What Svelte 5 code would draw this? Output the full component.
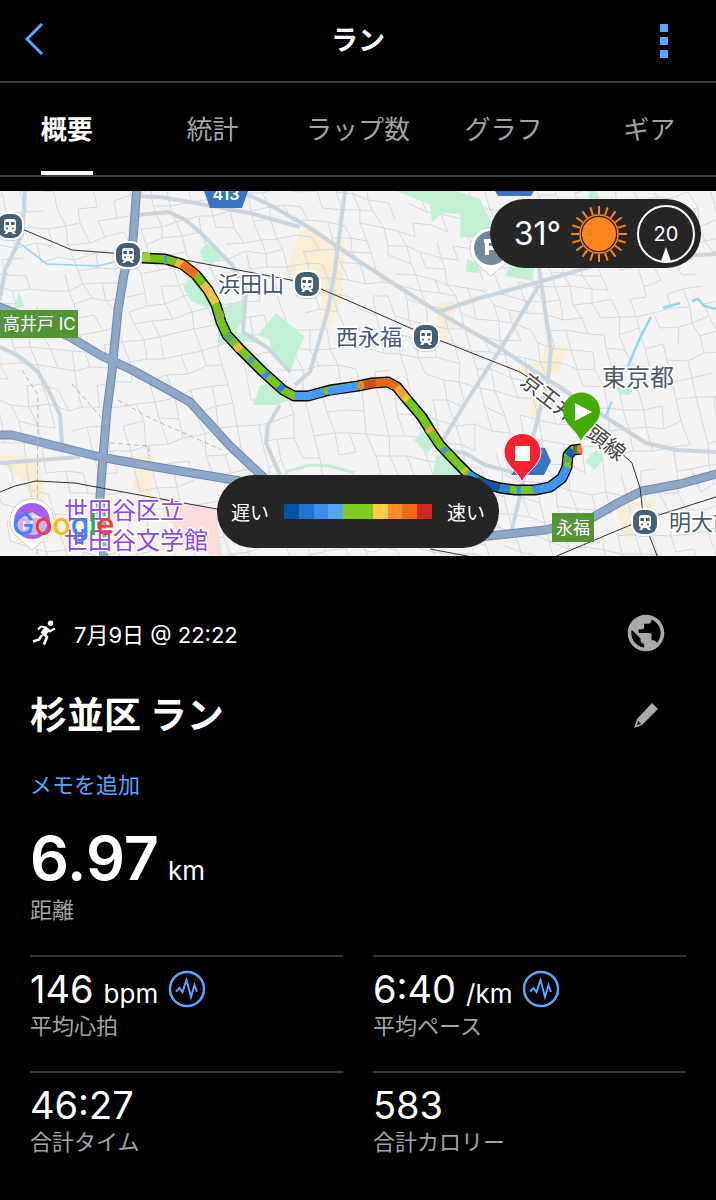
<script>
  const tabs = ['概要', '統計', 'ラップ数', 'グラフ', 'ギア'];
  let activeTab = '概要';

  const stats = [
    { value: '146', unit: 'bpm', label: '平均心拍', chart: true },
    { value: '6:40', unit: '/km', label: '平均ペース', chart: true },
    { value: '46:27', unit: '', label: '合計タイム', chart: false },
    { value: '583', unit: '', label: '合計カロリー', chart: false }
  ];

  const paceColors = [
    '#0850a6', '#1f74d4', '#3c8ff2', '#55a5ff', '#80cb1f',
    '#80cb1f', '#ffcb4b', '#ff8b31', '#ee6a15', '#d02626'
  ];

  // small repeatable noise so the streets are the same on every render
  function noise(a, b, seed) {
    const n = Math.sin(a * 127.1 + b * 311.7 + seed * 74.7) * 43758.5453;
    return n - Math.floor(n);
  }

  function buildStreets() {
    const size = 18;
    const point = (i, j) => {
      const bend = Math.sin(i * 0.21) * 20 + Math.cos(j * 0.33) * 12;
      const x = i * size + (noise(i, j, 1) - 0.5) * 6 + j * 5 - 120;
      const y = 180 + j * size + (noise(i, j, 2) - 0.5) * 6 + bend;
      return `${Math.round(x)} ${Math.round(y)}`;
    };
    let d = '';
    for (let i = 0; i < 48; i++) {
      for (let j = -2; j < 24; j++) {
        if (noise(i, j, 3) < 0.74) d += `M${point(i, j)}L${point(i + 1, j)}`;
        if (noise(i, j, 4) < 0.7) d += `M${point(i, j)}L${point(i, j + 1)}`;
      }
    }
    return d;
  }

  const streets = buildStreets();

  const parks = [
    '200,250 210,242 222,258 212,264 203,261',
    '183,286 194,278 208,288 219,307 209,309 190,300',
    '221,308 247,298 245,317 236,332 259,338 256,343 238,341 225,330',
    '276,313 304,336 290,372 272,356 270,340 258,335',
    '218,326 230,336 218,348',
    '253,405 260,385 279,383 291,400 276,405',
    '397,191 456,191 480,199 492,225 478,238 460,237 461,214 443,213 432,222 430,205',
    '467,259 480,264 478,273 466,272',
    '508,268 535,262 533,281 506,276',
    '588,191 596,191 600,200 590,200',
    '414,440 425,430 437,442 427,453',
    '436,455 456,451 470,478 432,478',
    '585,461 596,450 604,459 594,470',
    '616,388 634,388 630,395 620,394',
    '19,292 25,308 14,308'
  ];

  const shops = [
    '300,230 318,226 322,240 345,240 342,300 330,325 322,310 320,275 285,275',
    '438,303 455,300 455,325 446,340 436,325',
    '545,345 568,345 560,372 530,378 515,368 540,362',
    '0,455 38,457 46,500 34,502 18,475 0,464',
    '115,458 155,455 152,495 134,490 136,468',
    '530,395 546,398 540,420 528,415',
    '615,505 655,500 655,520 625,540'
  ];

  const roads = [
    'M138 196L160 197L190 202L250 213L300 227',
    'M240 191L270 205L310 228L360 262L438 312L500 348L530 368L585 404L610 420L646 443L676 450L716 452',
    'M438 312L480 298L539 282L596 265L650 258L716 254',
    'M539 268L545 310L551 350L548 380L532 440L520 495L512 530',
    'M539 285L500 350L480 380L455 420L440 445',
    'M345 191L335 270L328 310L310 372L295 385',
    'M138 215L168 212L184 219L200 232L232 265L246 290L243 332L268 348L290 372',
    'M25 191L22 235L5 270L0 300',
    'M0 347L20 357L38 372L50 393L60 415L62 445',
    'M0 463L80 457',
    'M280 405L268 425L266 443L280 475',
    'M437 449L465 453L485 465L512 472'
  ];

  const highways = [
    'M137 185L133 240L124 274L118 310L114 350L112 372L107 410L103 457L100 497L104 560',
    'M-5 305L40 323L70 337L100 355L132 370L165 388L190 402L230 446L275 488',
    'M-5 435L12 435L60 447L100 457L150 466L240 481',
    'M470 538L545 530L590 519L618 503L642 491L680 484L720 473'
  ];

  const railways = [
    'M22 229L72 250L125 254L190 261L307 283L356 304L426 335L520 372L545 388',
    'M618 450L632 463L640 488L644 522L658 558',
    'M0 492L15 486L36 481L75 483L150 497L217 509',
    'M430 549L478 558',
    'M552 558L640 521L716 497'
  ];

  const route =
    'M142 258L165 259L182 264L196 275L208 290L216 305L221 322L227 335L240 349L262 371L283 390L294 396L308 396L330 390L358 386L372 383L388 382L397 387L405 397L422 417L430 430L440 445L458 464L470 476L485 484L500 488L515 490L535 490L550 487L562 478L567 467L568 455L573 450L581 449';

  const paceSections = [
    { d: 'M142 257L150 257', color: '#a8c832' },
    { d: 'M164 260L167 260', color: '#4a9bd0' },
    { d: 'M176 262L183 265', color: '#f5b13a' },
    { d: 'M182 264L196 275', color: '#f16d1b' },
    { d: 'M203 284L208 290L216 303', color: '#f5c04a' },
    { d: 'M219 312L221 318', color: '#8aad45' },
    { d: 'M226 334L231 340', color: '#5ba873' },
    { d: 'M236 345L240 350', color: '#f0bd42' },
    { d: 'M249 358L253 362', color: '#579f9d' },
    { d: 'M264 373L268 377', color: '#3c8be0' },
    { d: 'M279 386L283 390', color: '#2c7bd2' },
    { d: 'M295 396L308 396L324 392', color: '#479bf8' },
    { d: 'M328 391L358 386', color: '#479bf8' },
    { d: 'M358 386L364 385', color: '#e48a32' },
    { d: 'M364 385L376 383', color: '#d64b1c' },
    { d: 'M376 383L388 382L397 387', color: '#e86b18' },
    { d: 'M397 387L404 396', color: '#f1a23b' },
    { d: 'M404 396L408 400', color: '#e8c443' },
    { d: 'M428 428L431 432', color: '#dcb242' },
    { d: 'M443 448L446 452', color: '#5292b0' },
    { d: 'M463 469L466 472', color: '#bcc13a' },
    { d: 'M468 474L477 480', color: '#3c8ff2' },
    { d: 'M477 480L485 484L500 488', color: '#0b56a8' },
    { d: 'M500 488L510 489', color: '#2f82de' },
    { d: 'M517 490L521 490', color: '#3c8ff2' },
    { d: 'M533 490L550 487L562 478L567 467', color: '#3f94f5' },
    { d: 'M567 462L568 456', color: '#65ab45' },
    { d: 'M568 456L573 450', color: '#1763ba' },
    { d: 'M573 450L577 450', color: '#5d6950' },
    { d: 'M578 450L582 449', color: '#ec8130' }
  ];

  const stations = [
    [10, 226],
    [128, 255],
    [307, 284],
    [426, 337],
    [645, 522]
  ];

  const rays = Array.from({ length: 20 }, (_, i) => i * 18);
</script>

<main class="activity">
  <header class="topbar">
    <button class="icon-button back" aria-label="戻る">
      <svg width="22" height="36" viewBox="0 0 22 36">
        <path d="M20 3L5 18L20 33" fill="none" stroke="#5aa5fb" stroke-width="3" />
      </svg>
    </button>
    <h1>ラン</h1>
    <button class="icon-button more" aria-label="メニュー">
      <svg width="8" height="34" viewBox="0 0 8 34" fill="#5aa5fb">
        <rect width="8" height="8" />
        <rect y="13" width="8" height="8" />
        <rect y="26" width="8" height="8" />
      </svg>
    </button>
  </header>

  <nav class="tabs-wrap">
    <div class="tabs" role="tablist">
      {#each tabs as tab}
        <button
          role="tab"
          class="tab"
          class:active={tab === activeTab}
          aria-selected={tab === activeTab}
          on:click={() => (activeTab = tab)}
        >
          {tab}
        </button>
      {/each}
    </div>
  </nav>

  <section class="map">
    <svg class="map-canvas" viewBox="0 191 716 365" role="img" aria-label="地図">
      <defs>
        <g id="station">
          <rect x="-14" y="-13" width="28" height="28" rx="11" fill="#b9c0c8" opacity="0.6" />
          <rect x="-14" y="-14" width="28" height="28" rx="11" fill="#fff" />
          <rect x="-12" y="-12" width="24" height="24" rx="9" fill="#475f72" />
          <path
            d="M-3 -7H3Q6 -7 6 -4V3Q6 5 4 5.500L6 8H3L1.500 6H-1.500L-3 8H-6L-4 5.500Q-6 5 -6 3V-4Q-6 -7 -3 -7Z"
            fill="#fff"
          />
          <path d="M-4.500 -4H-1V-1H-4.500ZM1 -4H4.500V-1H1Z" fill="#475f72" />
          <circle cx="-3" cy="2.500" r="1" fill="#475f72" />
          <circle cx="3" cy="2.500" r="1" fill="#475f72" />
        </g>
      </defs>

      <rect y="191" width="716" height="365" fill="#f4f3f4" />
      {#each shops as points}
        <polygon {points} fill="#f8eed6" />
      {/each}
      <path d={streets} fill="none" stroke="#d0d9e1" stroke-width="1" />
      {#each parks as points}
        <polygon {points} fill="#c3efd4" />
      {/each}
      <polygon points="158,497 216,509 222,556 190,550 176,530" fill="#f9dcdb" />
      <path d="M285 472L310 465L330 466L355 473" fill="none" stroke="#c3efd4" stroke-width="3" />

      {#each roads as d}
        <path {d} fill="none" stroke="#cad5de" stroke-width="4" stroke-linejoin="round" />
      {/each}
      <g fill="none" stroke="#8fd9e8">
        <path d="M18 242L47 264L97 266L115 262" stroke-width="1.500" />
        <path d="M628 366L640 338L651 317M663 308L680 303M692 301L698 299L704 306L716 309" stroke-width="2.500" />
        <path d="M605 418L612 401" stroke-width="2" />
      </g>
      {#each highways as d}
        <path {d} fill="none" stroke="#6f89ae" stroke-width="9" stroke-linejoin="round" />
      {/each}
      {#each highways as d}
        <path {d} fill="none" stroke="#8fa8c6" stroke-width="7" stroke-linejoin="round" />
      {/each}
      <g fill="none" stroke="#b9b9bb" stroke-dasharray="5 3">
        <path d="M22 370L38 395L37 556M72 384L108 425M118 400L150 418L222 450M110 443L149 446V456" />
      </g>
      {#each railways as d}
        <path {d} fill="none" stroke="#303030" stroke-width="1" />
      {/each}

      <!-- road shields -->
      <g fill="#3873c4">
        <polygon points="204,191 248,191 242,208 210,208" />
        <polygon points="495,191 534,191 531,196 498,196" />
        <polygon points="530,447 545,448 551,461 544,475 511,475" />
      </g>
      <text x="226" y="200" class="shield" text-anchor="middle">413</text>

      <rect x="-2" y="310" width="80" height="28" fill="#539434" />
      <text x="3" y="330" class="exit">高井戸 IC</text>
      <rect x="552" y="513" width="42" height="29" fill="#539434" />
      <text x="573" y="534" class="exit" text-anchor="middle">永福</text>

      <text x="218" y="292" class="place">浜田山</text>
      <text x="336" y="345" class="place">西永福</text>
      <text x="669" y="530" class="place">明大前</text>
      <text x="602" y="386" class="city">東京都</text>
      <text transform="translate(519 384) rotate(38)" class="line-name">京王井の頭線</text>

      <!-- sight hidden behind the weather badge -->
      <path d="M491 276L475 262A21 21 0 1 1 507 262Z" fill="#fff" stroke="#c9cdd1" />
      <circle cx="491" cy="248" r="17" fill="#74899a" />
      <path d="M484 239H500V243H489V246H500V250H489V255H485V243H484Z" fill="#fff" />

      <path d="M32 550L15 535A22 22 0 1 1 49 535Z" fill="#fff" stroke="#d0d0d4" />
      <circle cx="32" cy="521" r="18" fill="#a561ec" />
      <path d="M22 518L32 512L42 518ZM23 521H26V530H23ZM30 521H33V530H30ZM37 521H40V530H37Z" fill="#e4cdfa" />
      <text x="64" y="519" class="museum">世田谷区立</text>
      <text x="64" y="549" class="museum">世田谷文学館</text>
      <circle cx="372" cy="541" r="11" fill="#fff" stroke="#d0d0d4" />

      <path d={route} fill="none" stroke="#050505" stroke-width="11" stroke-linejoin="round" />
      <path d={route} fill="none" stroke="#78c51c" stroke-width="8" stroke-linejoin="round" />
      {#each paceSections as section}
        <path d={section.d} fill="none" stroke={section.color} stroke-width="8" stroke-linejoin="round" />
      {/each}

      {#each stations as [x, y]}
        <use href="#station" {x} {y} />
      {/each}

      <!-- start and finish -->
      <path d="M581 441C577 430 563 424 563 411A18 18 0 0 1 600 411C600 424 586 430 581 441Z" fill="#43ab05" />
      <polygon points="575,403 592,412 575,421" fill="#fff" />
      <path
        d="M522 482C518 471 504 465 504 452A18 18 0 0 1 541 452C541 465 527 471 522 482Z"
        fill="#f9212d"
        stroke="#fff"
        stroke-width="1"
      />
      <rect x="515" y="446" width="15" height="15" fill="#fff" />

      <ellipse cx="32" cy="525" rx="15" ry="10" fill="#fff" opacity="0.5" />
      <text x="12" y="535" class="google"
        ><tspan fill="#4285f4">G</tspan><tspan fill="#ea4335">o</tspan><tspan fill="#fbbc05">o</tspan><tspan
          fill="#4285f4">g</tspan><tspan fill="#34a853">l</tspan><tspan fill="#ea4335">e</tspan></text
      >
    </svg>

    <div class="weather">
      <span class="temperature">31°</span>
      <svg width="58" height="58" viewBox="-29 -29 58 58">
        <circle r="17" fill="#ff841f" />
        <circle r="19" fill="none" stroke="#ff841f" stroke-width="1.500" />
        {#each rays as angle}
          <path d="M0 -20V-28" stroke="#ff841f" stroke-width="2" transform="rotate({angle})" />
        {/each}
      </svg>
      <div class="wind">
        <span>20</span>
        <svg width="10" height="14" viewBox="0 0 10 14"><path d="M5 0L10 14H0Z" fill="#fff" /></svg>
      </div>
    </div>

    <div class="legend">
      <span>遅い</span>
      <div class="scale">
        {#each paceColors as color}
          <i style="background: {color}"></i>
        {/each}
      </div>
      <span>速い</span>
    </div>
  </section>

  <section class="summary">
    <div class="row meta">
      <svg width="24" height="26" viewBox="0 0 24 26" fill="none" stroke="#fff" stroke-linejoin="round">
        <circle cx="18.500" cy="3.300" r="2.700" fill="#fff" stroke="none" />
        <path d="M6 9.500L9 6.500L15 8" stroke-width="2" />
        <path d="M15.500 8L11 14.500" stroke-width="6" />
        <path d="M15 8.500L17.500 11.500L23 8.500" stroke-width="2" />
        <path d="M10.500 13L15 17L12 24.500" stroke-width="2.800" />
        <path d="M10 15L7 19.500L1 21.500" stroke-width="2.400" />
      </svg>
      <time>7月9日 @ 22:22</time>
      <button class="icon-button" aria-label="公開設定">
        <svg width="44" height="44" viewBox="0 0 24 24" fill="#a9a9a9">
          <path
            d="M12 2C6.480 2 2 6.480 2 12s4.480 10 10 10 10-4.480 10-10S17.520 2 12 2zm-1 17.930c-3.950-.49-7-3.850-7-7.930 0-.62.08-1.210.21-1.790L9 15v1c0 1.100.9 2 2 2v1.930zm6.900-2.540c-.26-.81-1-1.390-1.900-1.390h-1v-3c0-.55-.45-1-1-1H8v-2h2c.55 0 1-.45 1-1V7h2c1.100 0 2-.9 2-2v-.41c2.930 1.190 5 4.060 5 7.410 0 2.080-.8 3.970-2.100 5.390z"
          />
        </svg>
      </button>
    </div>

    <div class="row title">
      <h2>杉並区 ラン</h2>
      <button class="icon-button" aria-label="名前を編集">
        <svg width="44" height="44" viewBox="0 0 44 44">
          <path d="M28 9L34 15L18 31L10 34L13 25Z" fill="#a9a9a9" />
          <path d="M14 27L17 30L13 31Z" fill="#000" />
        </svg>
      </button>
    </div>

    <a class="memo" href="#memo">メモを追加</a>

    <div class="distance">
      <p class="value"><strong>6.97</strong> <span>km</span></p>
      <p class="label">距離</p>
    </div>

    <div class="stats">
      {#each stats as stat}
        <div class="stat">
          <p class="value">
            <span class="number">{stat.value}</span>
            {#if stat.unit}<span class="unit">{stat.unit}</span>{/if}
            {#if stat.chart}
              <svg width="38" height="38" viewBox="0 0 38 38" fill="none" stroke="#5aa5fb">
                <circle cx="19" cy="19" r="17" stroke-width="2.500" />
                <path d="M8 21.500L11.500 18L14.500 22L18.500 10L23 27L26.500 15L29 22" stroke-width="2" />
              </svg>
            {/if}
          </p>
          <p class="label">{stat.label}</p>
        </div>
      {/each}
    </div>
  </section>
</main>

<style>
  :global(body) {
    margin: 0;
    background: #000;
  }

  .activity {
    min-height: 100vh;
    background: #000;
    color: #fff;
    font-family: 'Inter', 'Noto Sans CJK JP', sans-serif;
  }

  h1,
  h2,
  p {
    margin: 0;
  }

  button {
    padding: 0;
    border: 0;
    background: none;
    font: inherit;
    cursor: pointer;
  }

  .icon-button {
    display: flex;
    align-items: center;
  }

  .topbar {
    display: grid;
    grid-template-columns: 1fr auto 1fr;
    align-items: center;
    height: 81px;
    padding: 0 48px 0 22px;
    border-bottom: 2px solid #3b3b3b;
  }

  .topbar h1 {
    padding-left: 26px;
    font-size: 27px;
    line-height: 40px;
    font-weight: 700;
  }

  .back {
    padding-bottom: 4px;
  }

  .more {
    justify-self: end;
  }

  .tabs-wrap {
    overflow: hidden;
    border-bottom: 2px solid #3b3b3b;
  }

  .tabs {
    display: grid;
    grid-template-columns: repeat(5, 1fr);
    justify-items: center;
    margin: 0 -6px;
  }

  .tab {
    height: 92px;
    border-bottom: 4px solid transparent;
    color: #a3a3a3;
    font-size: 26px;
  }

  .tab.active {
    border-bottom-color: #fff;
    color: #fff;
    font-weight: 700;
  }

  .map {
    position: relative;
    margin-top: 14px;
  }

  .map-canvas {
    display: block;
    width: 100%;
  }

  .map-canvas text {
    font-family: 'Inter', 'Noto Sans CJK JP', sans-serif;
    paint-order: stroke;
  }

  .map-canvas .shield {
    fill: #fff;
    font-size: 16px;
    font-weight: 600;
  }

  .map-canvas .exit {
    fill: #fff;
    font-size: 17px;
  }

  .place {
    fill: #43586c;
    stroke: #fff;
    stroke-width: 3px;
    font-size: 22px;
  }

  .city {
    fill: #505a64;
    stroke: #fff;
    stroke-width: 3px;
    font-size: 24px;
  }

  .line-name {
    fill: #444;
    stroke: #fff;
    stroke-width: 3px;
    font-size: 21px;
  }

  .museum {
    fill: #8b49e6;
    stroke: #fff;
    stroke-width: 3px;
    font-size: 24px;
  }

  .map-canvas .google {
    font-size: 30px;
    font-weight: 500;
  }

  .weather {
    position: absolute;
    top: 8px;
    right: 15px;
    display: flex;
    align-items: center;
    gap: 9px;
    box-sizing: border-box;
    height: 69px;
    padding: 0 6px 0 24px;
    border-radius: 35px;
    background: #252525;
  }

  .temperature {
    font-size: 32px;
  }

  .wind {
    display: grid;
    grid-template-rows: 1fr auto;
    justify-items: center;
    box-sizing: border-box;
    width: 58px;
    height: 58px;
    padding-top: 14px;
    border: 2px solid #fff;
    border-radius: 50%;
    font-size: 20px;
    line-height: 26px;
  }

  .legend {
    position: absolute;
    bottom: 8px;
    left: 50%;
    display: flex;
    align-items: center;
    gap: 15px;
    box-sizing: border-box;
    height: 73px;
    padding: 0 14px;
    border-radius: 37px;
    background: #252525;
    font-size: 19px;
    white-space: nowrap;
    transform: translateX(-50%);
  }

  .scale {
    display: grid;
    grid-template-columns: repeat(10, 1fr);
    width: 148px;
    height: 15px;
  }

  .summary {
    padding: 55px 30px 24px;
  }

  .row {
    display: flex;
    align-items: center;
  }

  .row .icon-button {
    margin-left: auto;
  }

  .meta {
    gap: 18px;
    height: 44px;
    padding: 0 18px 0 2px;
  }

  .meta time {
    font-size: 22px;
  }

  .title {
    margin-top: 38px;
    padding-right: 18px;
  }

  h2 {
    font-size: 37px;
    line-height: 46px;
    font-weight: 700;
  }

  .memo {
    display: block;
    width: fit-content;
    margin-top: 30px;
    color: #5aa5fb;
    font-size: 22px;
    line-height: 32px;
    text-decoration: none;
  }

  .value {
    display: flex;
    align-items: baseline;
  }

  .label {
    color: #a3a3a3;
    font-size: 22px;
    line-height: 34px;
  }

  .distance {
    margin-top: 22px;
  }

  .distance .value {
    gap: 9px;
    height: 70px;
    line-height: 70px;
  }

  .distance strong {
    font-size: 61px;
    font-weight: 600;
  }

  .distance span {
    font-size: 26px;
  }

  .stats {
    display: grid;
    grid-template-columns: 1fr 1fr;
    column-gap: 30px;
    margin-top: 28px;
  }

  .stat {
    height: 114px;
    border-top: 2px solid #353535;
  }

  .stat .value {
    gap: 10px;
    height: 40px;
    padding-top: 12px;
    line-height: 40px;
  }

  .number {
    font-size: 38px;
  }

  .unit {
    font-size: 26px;
  }

  .stat svg {
    align-self: center;
  }
</style>
